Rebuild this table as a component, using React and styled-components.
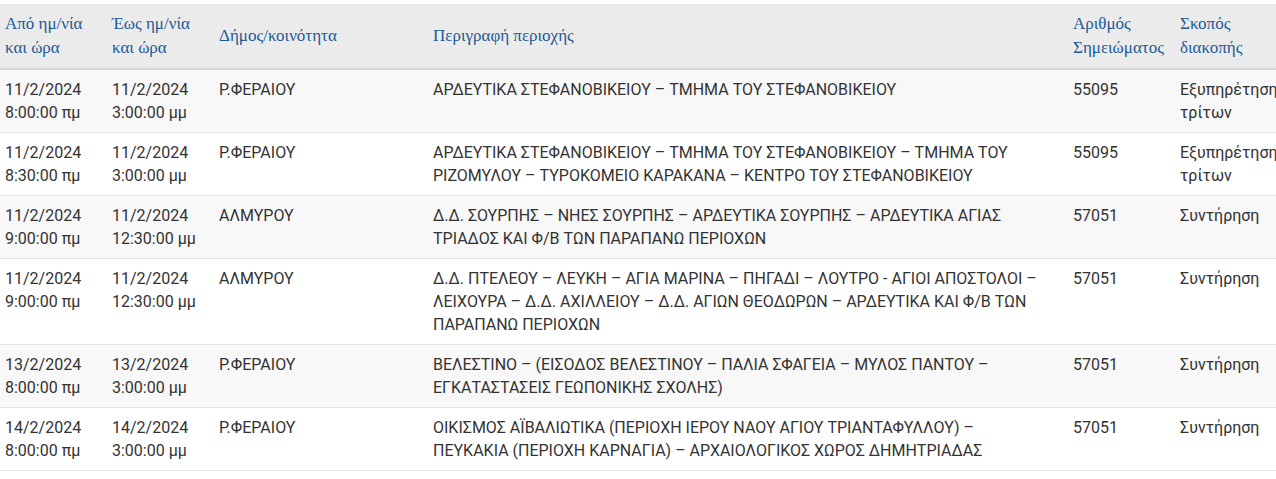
import React from 'react'
import styled, { createGlobalStyle } from 'styled-components'

const GlobalStyle = createGlobalStyle`
    html, body {
        margin: 0;
        padding: 0;
        background: #ffffff;
        overflow: hidden;
    }
`

const Page = styled.div`
    padding-top: 4px;
    width: 100vw;
    overflow: hidden;
`

const Table = styled.table`
    border-collapse: collapse;
    table-layout: fixed;
    width: 1282px;
    font-family: Roboto, "Noto Sans", sans-serif;
    font-size: 16px;
    color: #333333;
`

const HeadRow = styled.tr`
    background-color: #ebebeb;
    border-bottom: 2px solid #d6d6d6;
`

const HeadCell = styled.th`
    font-family: "Liberation Serif", "DejaVu Serif", serif;
    font-weight: normal;
    font-size: 17px;
    line-height: 24px;
    color: #1c5a96;
    text-align: left;
    vertical-align: middle;
    padding: 8px 5px;
`

const Row = styled.tr`
    background-color: ${(p) => (p.$odd ? '#f8f8f8' : '#ffffff')};
    border-bottom: 1px solid #e3e3e3;
`

const Cell = styled.td`
    vertical-align: top;
    line-height: 23px;
    padding: 8px ${(p) => (p.$wide ? '20px' : '5px')} 8px 5px;
    white-space: ${(p) => (p.$nowrap ? 'nowrap' : 'normal')};
    overflow: visible;
`

const columns = [
    { title: 'Από ημ/νία και ώρα', width: 107 },
    { title: 'Έως ημ/νία και ώρα', width: 107 },
    { title: 'Δήμος/κοινότητα', width: 214 },
    { title: 'Περιγραφή περιοχής', width: 640 },
    { title: 'Αριθμός Σημειώματος', width: 107 },
    { title: 'Σκοπός διακοπής', width: 107 },
]

const rows = [
    {
        from: ['11/2/2024', '8:00:00 πμ'],
        to: ['11/2/2024', '3:00:00 μμ'],
        area: 'Ρ.ΦΕΡΑΙΟΥ',
        desc: 'ΑΡΔΕΥΤΙΚΑ ΣΤΕΦΑΝΟΒΙΚΕΙΟΥ – ΤΜΗΜΑ ΤΟΥ ΣΤΕΦΑΝΟΒΙΚΕΙΟΥ',
        note: '55095',
        reason: 'Εξυπηρέτηση τρίτων',
    },
    {
        from: ['11/2/2024', '8:30:00 πμ'],
        to: ['11/2/2024', '3:00:00 μμ'],
        area: 'Ρ.ΦΕΡΑΙΟΥ',
        desc: 'ΑΡΔΕΥΤΙΚΑ ΣΤΕΦΑΝΟΒΙΚΕΙΟΥ – ΤΜΗΜΑ ΤΟΥ ΣΤΕΦΑΝΟΒΙΚΕΙΟΥ – ΤΜΗΜΑ ΤΟΥ ΡΙΖΟΜΥΛΟΥ – ΤΥΡΟΚΟΜΕΙΟ ΚΑΡΑΚΑΝΑ – ΚΕΝΤΡΟ ΤΟΥ ΣΤΕΦΑΝΟΒΙΚΕΙΟΥ',
        note: '55095',
        reason: 'Εξυπηρέτηση τρίτων',
    },
    {
        from: ['11/2/2024', '9:00:00 πμ'],
        to: ['11/2/2024', '12:30:00 μμ'],
        area: 'ΑΛΜΥΡΟΥ',
        desc: 'Δ.Δ. ΣΟΥΡΠΗΣ – ΝΗΕΣ ΣΟΥΡΠΗΣ – ΑΡΔΕΥΤΙΚΑ ΣΟΥΡΠΗΣ – ΑΡΔΕΥΤΙΚΑ ΑΓΙΑΣ ΤΡΙΑΔΟΣ ΚΑΙ Φ/Β ΤΩΝ ΠΑΡΑΠΑΝΩ ΠΕΡΙΟΧΩΝ',
        note: '57051',
        reason: 'Συντήρηση',
    },
    {
        from: ['11/2/2024', '9:00:00 πμ'],
        to: ['11/2/2024', '12:30:00 μμ'],
        area: 'ΑΛΜΥΡΟΥ',
        desc: 'Δ.Δ. ΠΤΕΛΕΟΥ – ΛΕΥΚΗ – ΑΓΙΑ ΜΑΡΙΝΑ – ΠΗΓΑΔΙ – ΛΟΥΤΡΟ - ΑΓΙΟΙ ΑΠΟΣΤΟΛΟΙ – ΛΕΙΧΟΥΡΑ – Δ.Δ. ΑΧΙΛΛΕΙΟΥ – Δ.Δ. ΑΓΙΩΝ ΘΕΟΔΩΡΩΝ – ΑΡΔΕΥΤΙΚΑ ΚΑΙ Φ/Β ΤΩΝ ΠΑΡΑΠΑΝΩ ΠΕΡΙΟΧΩΝ',
        note: '57051',
        reason: 'Συντήρηση',
    },
    {
        from: ['13/2/2024', '8:00:00 πμ'],
        to: ['13/2/2024', '3:00:00 μμ'],
        area: 'Ρ.ΦΕΡΑΙΟΥ',
        desc: 'ΒΕΛΕΣΤΙΝΟ – (ΕΙΣΟΔΟΣ ΒΕΛΕΣΤΙΝΟΥ – ΠΑΛΙΑ ΣΦΑΓΕΙΑ – ΜΥΛΟΣ ΠΑΝΤΟΥ – ΕΓΚΑΤΑΣΤΑΣΕΙΣ ΓΕΩΠΟΝΙΚΗΣ ΣΧΟΛΗΣ)',
        note: '57051',
        reason: 'Συντήρηση',
    },
    {
        from: ['14/2/2024', '8:00:00 πμ'],
        to: ['14/2/2024', '3:00:00 μμ'],
        area: 'Ρ.ΦΕΡΑΙΟΥ',
        desc: 'ΟΙΚΙΣΜΟΣ ΑΪΒΑΛΙΩΤΙΚΑ (ΠΕΡΙΟΧΗ ΙΕΡΟΥ ΝΑΟΥ ΑΓΙΟΥ ΤΡΙΑΝΤΑΦΥΛΛΟΥ) – ΠΕΥΚΑΚΙΑ (ΠΕΡΙΟΧΗ ΚΑΡΝΑΓΙΑ) – ΑΡΧΑΙΟΛΟΓΙΚΟΣ ΧΩΡΟΣ ΔΗΜΗΤΡΙΑΔΑΣ',
        note: '57051',
        reason: 'Συντήρηση',
    },
]

function App() {
    return (
        <>
            <GlobalStyle />
            <Page>
                <Table>
                    <colgroup>
                        {columns.map((c, i) => <col key={i} style={{ width: c.width }} />)}
                    </colgroup>
                    <thead>
                        <HeadRow>
                            {columns.map((c, i) => <HeadCell key={i}>{c.title}</HeadCell>)}
                        </HeadRow>
                    </thead>
                    <tbody>
                        {rows.map((r, i) => (
                            <Row key={i} $odd={i % 2 === 0}>
                                <Cell $nowrap>{r.from[0]}<br />{r.from[1]}</Cell>
                                <Cell $nowrap>{r.to[0]}<br />{r.to[1]}</Cell>
                                <Cell>{r.area}</Cell>
                                <Cell $wide>{r.desc}</Cell>
                                <Cell>{r.note}</Cell>
                                <Cell>{r.reason}</Cell>
                            </Row>
                        ))}
                    </tbody>
                </Table>
            </Page>
        </>
    )
}

export default App
